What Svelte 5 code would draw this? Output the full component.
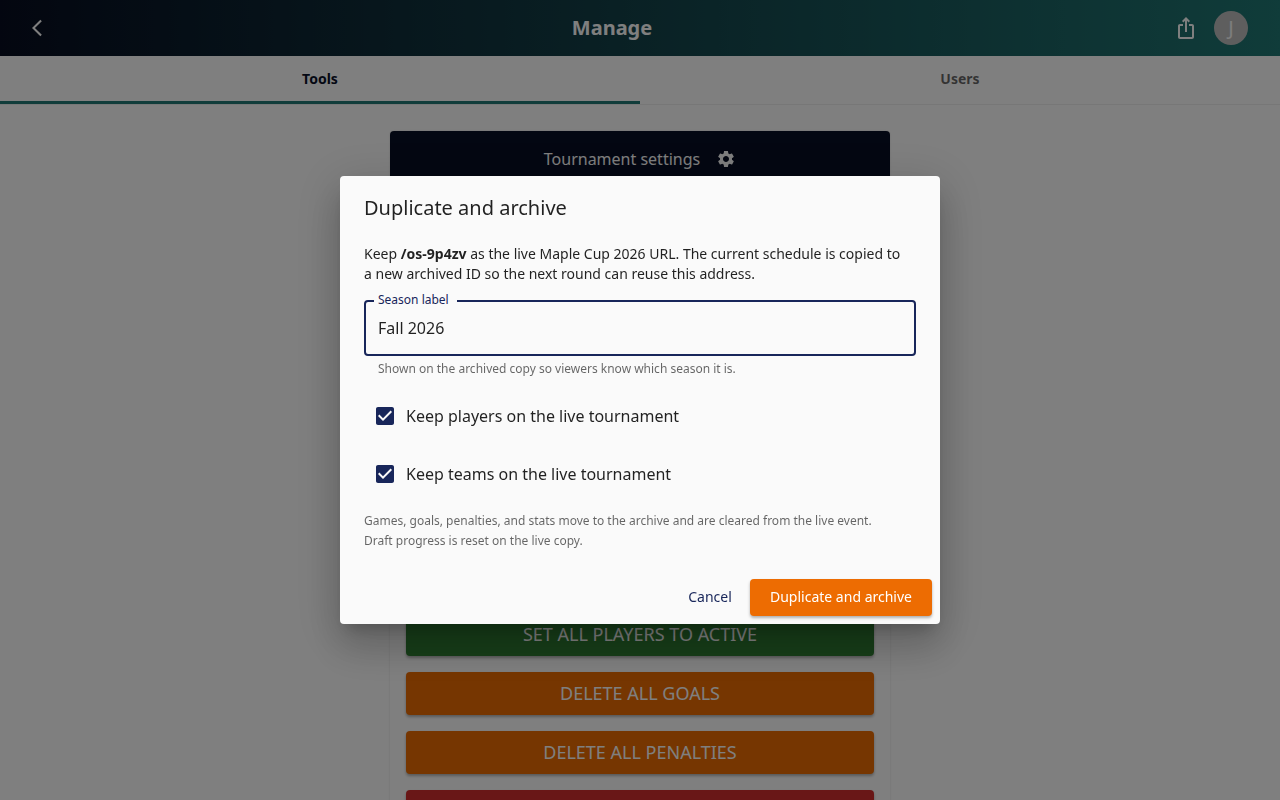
<script>
    // State variables
    let activeTab = 'tools';
    let seasonLabel = 'Fall 2026';
    let keepPlayers = true;
    let keepTeams = true;
    let open = true;

    const tabs = [
        { id: 'tools', label: 'Tools' },
        { id: 'users', label: 'Users' }
    ];

    const actions = [
        { label: 'Set all players to active', color: 'success' },
        { label: 'Delete all goals', color: 'warning' },
        { label: 'Delete all penalties', color: 'warning' },
        { label: '', color: 'error' }
    ];

    function closeDialog() {
        open = false;
    }
</script>

<div class="page">
    <header class="app-bar">
        <button class="icon-button back" type="button">
            <svg width="20" height="20" viewBox="0 0 24 24">
                <path d="M17.77 3.77 16 2 6 12l10 10 1.77-1.77L9.54 12z" />
            </svg>
        </button>
        <h1>Manage</h1>
        <button class="icon-button" type="button">
            <svg width="24" height="24" viewBox="0 0 24 24">
                <path d="m16 5-1.42 1.42-1.59-1.59V16h-1.98V4.83L9.42 6.42 8 5l4-4 4 4zm4 5v11c0 1.1-.9 2-2 2H6c-1.11 0-2-.9-2-2V10c0-1.11.89-2 2-2h3v2H6v11h12V10h-3V8h3c1.1 0 2 .89 2 2z" />
            </svg>
        </button>
        <button class="icon-button" type="button">
            <span class="avatar">J</span>
        </button>
    </header>

    <nav class="tabs">
        {#each tabs as tab}
            <button
                    type="button"
                    class="tab"
                    class:active={activeTab === tab.id}
                    on:click={() => (activeTab = tab.id)}
            >
                {tab.label}
            </button>
        {/each}
    </nav>

    <main class="card">
        <button class="card-header" type="button">
            Tournament settings
            <svg width="20" height="20" viewBox="0 0 24 24">
                <path d="M19.14 12.94c.04-.3.06-.61.06-.94 0-.32-.02-.64-.07-.94l2.03-1.58c.18-.14.23-.41.12-.61l-1.92-3.32c-.12-.22-.37-.29-.59-.22l-2.39.96c-.5-.38-1.03-.7-1.62-.94l-.36-2.54c-.04-.24-.24-.41-.48-.41h-3.84c-.24 0-.43.17-.47.41l-.36 2.54c-.59.24-1.13.57-1.62.94l-2.39-.96c-.22-.08-.47 0-.59.22L2.74 8.87c-.12.21-.08.47.12.61l2.03 1.58c-.05.3-.09.63-.09.94s.02.64.07.94l-2.03 1.58c-.18.14-.23.41-.12.61l1.92 3.32c.12.22.37.29.59.22l2.39-.96c.5.38 1.03.7 1.62.94l.36 2.54c.05.24.24.41.48.41h3.84c.24 0 .44-.17.47-.41l.36-2.54c.59-.24 1.13-.56 1.62-.94l2.39.96c.22.08.47 0 .59-.22l1.92-3.32c.12-.22.07-.47-.12-.61zM12 15.6c-1.98 0-3.6-1.62-3.6-3.6s1.62-3.6 3.6-3.6 3.6 1.62 3.6 3.6-1.62 3.6-3.6 3.6" />
            </svg>
        </button>
        <div class="actions">
            {#each actions as action}
                <button type="button" class="action {action.color}">{action.label}</button>
            {/each}
        </div>
    </main>
</div>

{#if open}
    <div class="backdrop">
        <div class="dialog" role="dialog" aria-modal="true" aria-labelledby="dialog-title">
            <h2 id="dialog-title">Duplicate and archive</h2>

            <form id="archive-form" class="dialog-content" on:submit|preventDefault={closeDialog}>
                <p class="intro">
                    Keep <strong>/os-9p4zv</strong> as the live Maple Cup 2026 URL. The current schedule is copied to
                    <br>
                    a new archived ID so the next round can reuse this address.
                </p>

                <div class="form-group">
                    <label for="season">Season label</label>
                    <input type="text" id="season" aria-describedby="season-help" bind:value={seasonLabel}>
                    <p id="season-help">Shown on the archived copy so viewers know which season it is.</p>
                </div>

                <label class="check">
                    <input type="checkbox" bind:checked={keepPlayers}>
                    <svg width="24" height="24" viewBox="0 0 24 24">
                        <path d="M19 3H5c-1.11 0-2 .9-2 2v14c0 1.1.89 2 2 2h14c1.11 0 2-.9 2-2V5c0-1.1-.89-2-2-2zm-9 14-5-5 1.41-1.41L10 14.17l7.59-7.59L19 8z" />
                    </svg>
                    Keep players on the live tournament
                </label>

                <label class="check">
                    <input type="checkbox" bind:checked={keepTeams}>
                    <svg width="24" height="24" viewBox="0 0 24 24">
                        <path d="M19 3H5c-1.11 0-2 .9-2 2v14c0 1.1.89 2 2 2h14c1.11 0 2-.9 2-2V5c0-1.1-.89-2-2-2zm-9 14-5-5 1.41-1.41L10 14.17l7.59-7.59L19 8z" />
                    </svg>
                    Keep teams on the live tournament
                </label>

                <p class="note">
                    Games, goals, penalties, and stats move to the archive and are cleared from the live event.
                    <br>
                    Draft progress is reset on the live copy.
                </p>
            </form>

            <div class="dialog-actions">
                <button type="button" class="cancel" on:click={closeDialog}>Cancel</button>
                <button type="submit" class="submit" form="archive-form">Duplicate and archive</button>
            </div>
        </div>
    </div>
{/if}

<style>
    :global(body) {
        overflow: hidden;
        background-color: #fff;
        font-family: "Noto Sans", sans-serif;
        color: rgba(0, 0, 0, 0.87);
    }

    button,
    input {
        font-family: inherit;
    }

    button {
        border: none;
        padding: 0;
        background: none;
        cursor: pointer;
    }

    h1,
    h2,
    p {
        margin: 0;
    }

    svg {
        display: block;
        fill: currentColor;
    }

    .page {
        height: 100vh;
        overflow: hidden;
    }

    .app-bar {
        display: flex;
        align-items: center;
        height: 56px;
        padding: 0 24px 0 16px;
        box-sizing: border-box;
        background: linear-gradient(90deg, #070d20 0%, #207874 100%);
        color: #fff;
    }

    .app-bar h1 {
        flex: 1;
        font-size: 20px;
        line-height: 32px;
        font-weight: 700;
        text-align: center;
    }

    .icon-button {
        padding: 8px;
        color: inherit;
    }

    .back {
        padding: 11px;
    }

    .avatar {
        display: block;
        width: 34px;
        height: 34px;
        border-radius: 50%;
        background-color: #bdbdbd;
        color: #fafafa;
        font-size: 20px;
        line-height: 34px;
        text-align: center;
    }

    .tabs {
        display: flex;
        border-bottom: 1px solid #eee;
    }

    .tab {
        flex: 1;
        height: 48px;
        border-bottom: 3px solid transparent;
        color: rgba(0, 0, 0, 0.6);
        font-size: 14px;
        font-weight: 700;
    }

    .tab.active {
        border-bottom-color: #207874;
        color: #0a1128;
    }

    .card {
        max-width: 500px;
        margin: 26px auto;
        border-radius: 4px;
        box-shadow: 0 0 2px rgba(0, 0, 0, 0.16);
    }

    .card-header {
        display: flex;
        align-items: center;
        justify-content: center;
        gap: 16px;
        width: 100%;
        height: 56px;
        border-radius: 4px 4px 0 0;
        background-color: #070e24;
        color: #fff;
        font-size: 16px;
    }

    .actions {
        display: flex;
        flex-direction: column;
        gap: 16px;
        padding: 426px 16px 16px;
    }

    .action {
        flex: none;
        height: 43px;
        padding-bottom: 2px;
        border-radius: 4px;
        box-shadow: 0 2px 3px rgba(0, 0, 0, 0.3);
        color: #fff;
        font-size: 18px;
        text-transform: uppercase;
    }

    .success {
        background-color: #2e7d32;
    }

    .warning {
        background-color: #ed6c02;
    }

    .error {
        background-color: #d32f2f;
    }

    .backdrop {
        position: fixed;
        inset: 0;
        display: flex;
        align-items: center;
        justify-content: center;
        background-color: rgba(0, 0, 0, 0.5);
    }

    .dialog {
        width: 100%;
        max-width: 600px;
        border-radius: 4px;
        background-color: #fafafa;
        box-shadow:
            0 11px 15px -7px rgba(0, 0, 0, 0.2),
            0 24px 38px 3px rgba(0, 0, 0, 0.14),
            0 9px 46px 8px rgba(0, 0, 0, 0.12);
    }

    h2 {
        padding: 16px 24px;
        font-size: 20px;
        line-height: 32px;
        font-weight: 400;
    }

    .dialog-content {
        display: flex;
        flex-direction: column;
        gap: 16px;
        padding: 4px 24px 20px;
    }

    .intro {
        font-size: 14px;
        line-height: 20px;
    }

    .form-group {
        position: relative;
    }

    .form-group label {
        position: absolute;
        top: -10px;
        left: 10px;
        padding: 0 8px 0 4px;
        background-color: #fafafa;
        color: #18265a;
        font-size: 12px;
        line-height: 20px;
    }

    .form-group input {
        display: block;
        width: 100%;
        height: 56px;
        padding: 0 12px;
        border: 2px solid #18265a;
        border-radius: 4px;
        box-sizing: border-box;
        outline: none;
        background: none;
        color: inherit;
        font-size: 16px;
    }

    .form-group p {
        padding: 3px 14px 0;
        color: rgba(0, 0, 0, 0.6);
        font-size: 12px;
        line-height: 20px;
    }

    .check {
        position: relative;
        display: flex;
        align-items: center;
        gap: 9px;
        height: 42px;
        padding-left: 9px;
        font-size: 16px;
        cursor: pointer;
    }

    .check input {
        position: absolute;
        width: 24px;
        height: 24px;
        margin: 0;
        opacity: 0;
    }

    .check svg {
        color: #18265a;
    }

    .check input:not(:checked) + svg {
        opacity: 0.3;
    }

    .note {
        color: rgba(0, 0, 0, 0.6);
        font-size: 12px;
        line-height: 20px;
    }

    .dialog-actions {
        display: flex;
        justify-content: flex-end;
        gap: 8px;
        padding: 8px;
    }

    .dialog-actions button {
        height: 37px;
        padding: 0 8px 2px;
        border-radius: 4px;
        font-size: 14px;
    }

    .cancel {
        min-width: 64px;
        color: #18265a;
    }

    .submit {
        min-width: 182px;
        background-color: #ed6c02;
        box-shadow: 0 2px 3px rgba(0, 0, 0, 0.3);
        color: #fff;
    }
</style>
